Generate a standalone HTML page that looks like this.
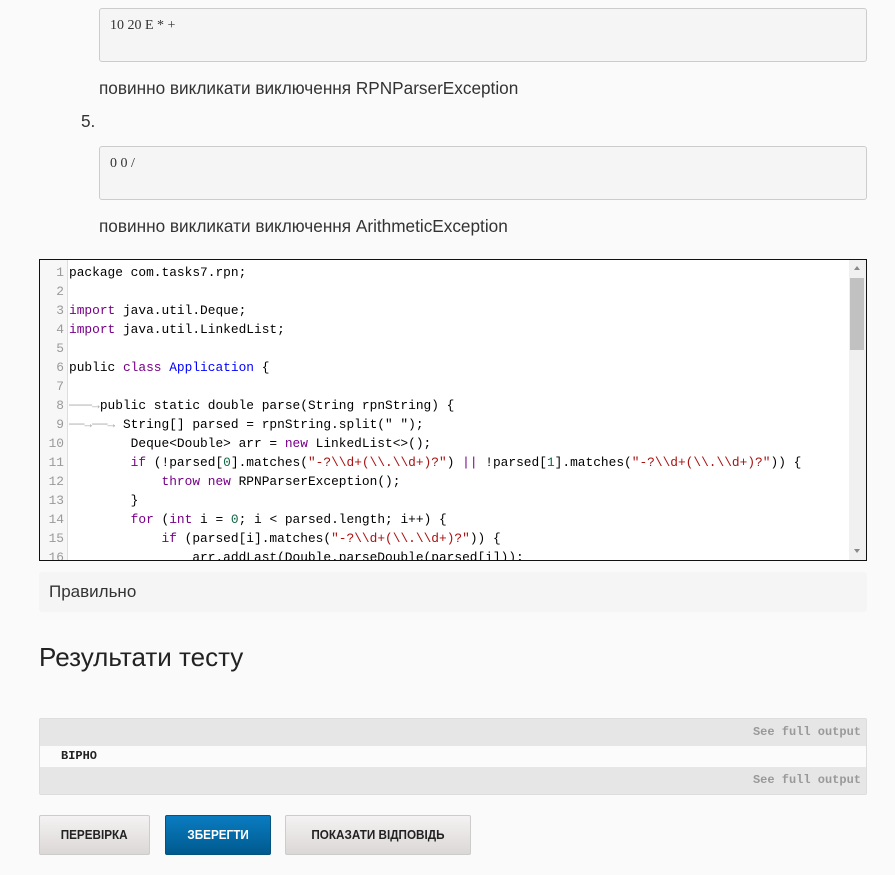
<!DOCTYPE html>
<html><head><meta charset="utf-8"><style>
*{box-sizing:border-box;margin:0;padding:0}
body{width:895px;height:875px;overflow:hidden;background:#fafafa;font-family:"Liberation Sans",sans-serif;color:#333;position:relative}
.abs{position:absolute}
.tbox{position:absolute;left:99px;width:768px;height:54px;background:#f5f5f5;border:1px solid #ccc;border-radius:3px;font-family:"Liberation Serif",serif;font-size:14px;color:#333;padding:9px 10px}
.p{position:absolute;left:99px;font-size:17.2px;color:#333;line-height:20px}
#code{left:39px;top:259px;width:828px;height:302px;border:1px solid #111;background:#fff;overflow:hidden}
#gut{position:absolute;left:0;top:0;width:28px;height:300px;background:#f7f7f7;border-right:1px solid #ddd}
.ln{position:absolute;font-family:"Liberation Mono",monospace;font-size:12.85px;line-height:19px;white-space:pre;color:#000}
.num{color:#999;text-align:right;width:24px;left:0}
.k{color:#708}.d{color:#00f}.s{color:#a11}.n{color:#164}.t{color:#aaa}
#sb{position:absolute;right:0;top:0;width:17px;height:300px;background:#f0f0f0}
.btn{position:absolute;top:815px;height:40px;border:1px solid #ccc;border-radius:2px;background:linear-gradient(#f4f2f2,#dcd7d7);font-weight:bold;font-size:13px;color:#222;text-align:center;line-height:38px}
.btn span{display:inline-block;transform:scaleX(0.9)}
.out{position:absolute;left:39px;width:828px;font-family:"Liberation Mono",monospace;font-size:12px;font-weight:bold}
</style></head><body>
<div class="tbox" style="top:8px">10 20 E * +</div>
<div class="p" style="top:78px">повинно викликати виключення RPNParserException</div>
<div class="p" style="left:81px;top:111px">5.</div>
<div class="tbox" style="top:146px">0 0 /</div>
<div class="p" style="top:216px">повинно викликати виключення ArithmeticException</div>

<div id="code" class="abs">
<div id="gut"></div>
<div id="sb"><div style="position:absolute;left:5px;top:6px;border:3px solid transparent;border-bottom:4px solid #888;border-top:0;width:0"></div><div style="position:absolute;left:1px;top:18px;width:14px;height:72px;background:#c1c1c1"></div><div style="position:absolute;left:5px;bottom:7px;border:3px solid transparent;border-top:4px solid #888;border-bottom:0;width:0"></div></div>
<div class="ln num" style="top:3px">1
2
3
4
5
6
7
8
9
10
11
12
13
14
15
16</div>
<div class="ln" style="left:29px;top:3px">package com.tasks7.rpn;

<span class="k">import</span> java.util.Deque;
<span class="k">import</span> java.util.LinkedList;

public <span class="k">class</span> <span class="d">Application</span> {

<span class="t">───→</span>public static double parse(String rpnString) {
<span class="t">──→──→</span> String[] parsed = rpnString.split(" ");
        Deque&lt;Double&gt; arr = <span class="k">new</span> LinkedList&lt;&gt;();
        <span class="k">if</span> (!parsed[<span class="n">0</span>].matches(<span class="s">"-?\\d+(\\.\\d+)?"</span>) <span class="k">||</span> !parsed[<span class="n">1</span>].matches(<span class="s">"-?\\d+(\\.\\d+)?"</span>)) {
            <span class="k">throw</span> <span class="k">new</span> RPNParserException();
        }
        <span class="k">for</span> (<span class="k">int</span> i = <span class="n">0</span>; i &lt; parsed.length; i++) {
            <span class="k">if</span> (parsed[i].matches(<span class="s">"-?\\d+(\\.\\d+)?"</span>)) {
                arr.addLast(Double.parseDouble(parsed[i]));</div>
</div>

<div class="abs" style="left:39px;top:572px;width:828px;height:40px;background:#f5f5f5;border-radius:3px;padding:10px 10px;font-size:17px;color:#333;line-height:20px">Правильно</div>
<div class="abs" style="left:39px;top:642px;font-size:26px;color:#222;line-height:30px">Результати тесту</div>

<div class="abs" style="left:39px;top:718px;width:828px;height:77px;border:1px solid #ddd;border-radius:2px;background:#e6e6e6"></div>
<div class="out" style="top:719px;height:27px;line-height:27px;text-align:right;padding-right:6px;color:#999">See full output</div>
<div class="out" style="top:746px;height:21px;line-height:21px;background:#fbfbfb;padding-left:21px;color:#222;left:40px;width:826px">ВІРНО</div>
<div class="out" style="top:767px;height:27px;line-height:27px;text-align:right;padding-right:6px;color:#999">See full output</div>

<div class="btn" style="left:39px;width:111px"><span>ПЕРЕВІРКА</span></div>
<div class="btn" style="left:165px;width:106px;background:linear-gradient(#0a7cc1,#005a8f);border-color:#04527f;color:#fff"><span>ЗБЕРЕГТИ</span></div>
<div class="btn" style="left:285px;width:186px"><span>ПОКАЗАТИ ВІДПОВІДЬ</span></div>
</body></html>
